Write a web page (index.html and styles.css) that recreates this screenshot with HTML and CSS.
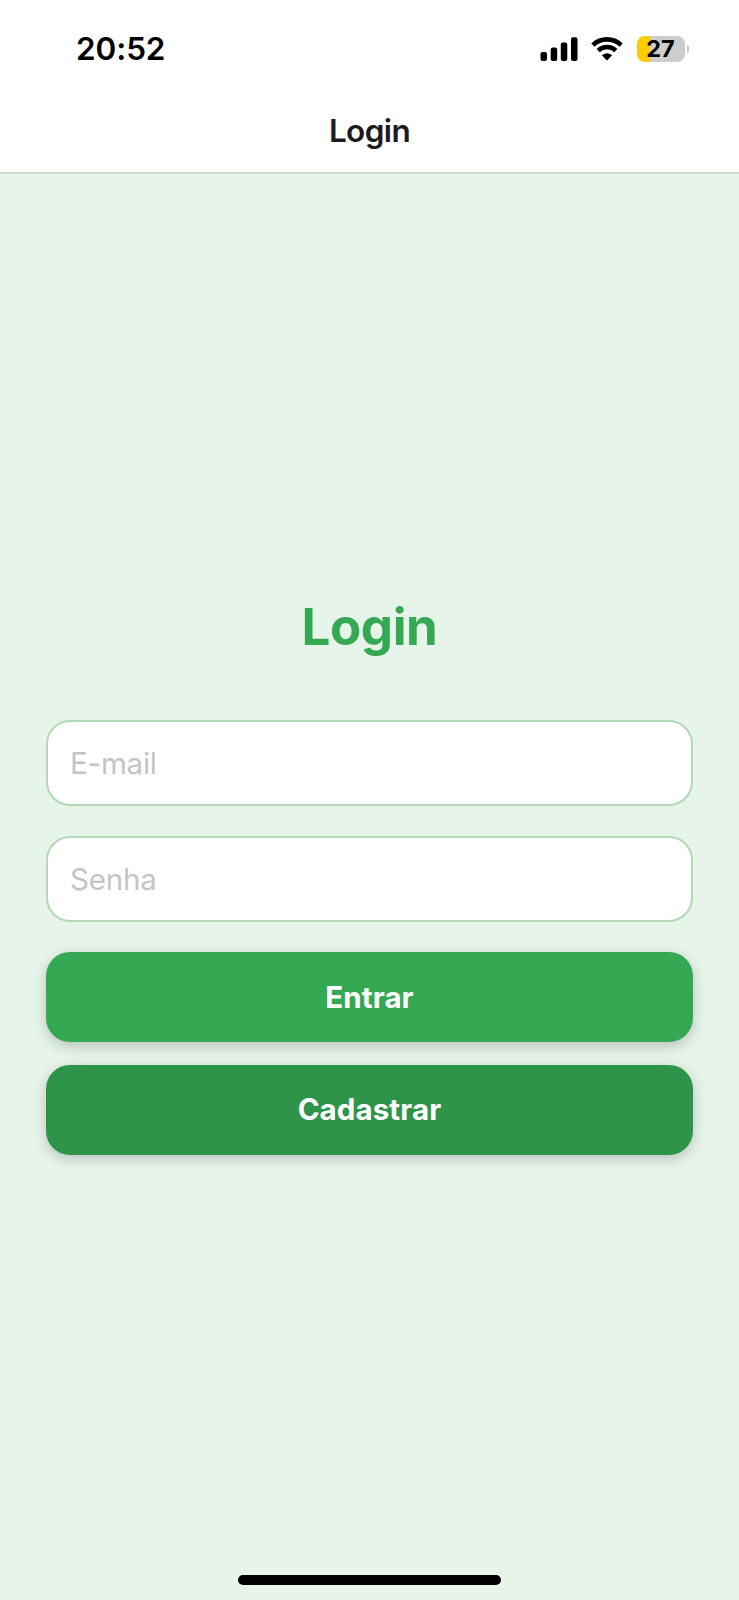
FILE: index.html
```html
<!DOCTYPE html>
<html lang="pt-BR">
<head>
<meta charset="utf-8">
<title>Login</title>
<link rel="stylesheet" href="styles.css">
</head>
<body>
<div class="screen">
  <header class="header">
    <div class="status">
      <span class="time">20:52</span>
      <div class="indicators">
        <svg class="signal" width="38" height="24" viewBox="0 0 38 24">
          <rect x="0.5" y="15" width="6.5" height="9" rx="2"/>
          <rect x="10.7" y="10.5" width="6.5" height="13.5" rx="2"/>
          <rect x="20.8" y="5.5" width="6.5" height="18.5" rx="2"/>
          <rect x="31" y="0.3" width="6.5" height="23.7" rx="2"/>
        </svg>
        <svg class="wifi" width="32" height="24" viewBox="0 0 32 24">
          <path d="M1.9 8.1A20.2 20.2 0 0 1 30.1 8.1" fill="none" stroke="#000" stroke-width="4.6"/>
          <path d="M7.2 13.6A12.6 12.6 0 0 1 24.8 13.6" fill="none" stroke="#000" stroke-width="4.4"/>
          <path d="M11.1 18.6Q10.8 18.2 11.3 17.9Q16 14.7 20.7 17.9Q21.2 18.2 20.9 18.6L16.6 23.1Q16 23.7 15.4 23.1Z"/>
        </svg>
        <div class="battery">
          <span class="battery-body">27</span>
          <span class="battery-tip"></span>
        </div>
      </div>
    </div>
    <div class="nav-title">Login</div>
  </header>
  <main class="content">
    <h1 class="title">Login</h1>
    <input class="field" type="text" placeholder="E-mail">
    <input class="field" type="password" placeholder="Senha">
    <button class="button" type="button">Entrar</button>
    <button class="button button-dark" type="button">Cadastrar</button>
  </main>
  <footer class="home"><div class="home-bar"></div></footer>
</div>
</body>
</html>
```
FILE: styles.css
```css
* { box-sizing: border-box; }
body {
  margin: 0;
  font-family: Inter, "Liberation Sans", sans-serif;
}
.screen {
  height: 1600px;
  display: flex;
  flex-direction: column;
  background: #e6f4ea;
  overflow: hidden;
}
.header {
  height: 174px;
  background: #fff;
  border-bottom: 2px solid #cddcd1;
}
.status {
  height: 98px;
  padding: 0 50px 0 76px;
  display: flex;
  align-items: center;
  justify-content: space-between;
}
.time {
  font-size: 31.5px;
  font-weight: 600;
  line-height: 40px;
  letter-spacing: -0.1px;
}
.indicators {
  display: flex;
  align-items: center;
}
.signal { display: block; margin-right: 13px; }
.wifi { display: block; margin-right: 14px; }
.battery {
  display: flex;
  align-items: center;
  gap: 2px;
}
.battery-body {
  width: 48px;
  height: 26px;
  border-radius: 7.5px;
  background: linear-gradient(to right, #fc0 13px, #cdcdcd 13px);
  font-size: 23.5px;
  font-weight: 700;
  line-height: 26px;
  text-align: center;
}
.battery-tip {
  width: 2.5px;
  height: 8px;
  border-radius: 0 3px 3px 0;
  background: #cdcdcd;
}
.nav-title {
  height: 66px;
  font-size: 31.5px;
  font-weight: 600;
  line-height: 66px;
  letter-spacing: -0.6px;
  text-align: center;
  color: #1c1c1e;
}
.content {
  flex: 1;
  padding: 422px 46px 0;
  display: flex;
  flex-direction: column;
}
.title {
  margin: 0 0 62px;
  font-size: 51px;
  font-weight: 700;
  line-height: 62px;
  letter-spacing: -0.4px;
  text-align: center;
  color: #34a853;
}
.field {
  width: 100%;
  height: 86px;
  margin: 0 0 30px;
  padding: 0 22px 1px;
  border: 2px solid #b2d8b4;
  border-radius: 24px;
  background: #fff;
  font: 400 29.5px Inter, "Liberation Sans", sans-serif;
  letter-spacing: -0.2px;
  outline: none;
}
.field::placeholder { color: #c4c4c6; opacity: 1; }
.button {
  flex: none;
  height: 90px;
  margin: 0 0 22.5px;
  padding: 0 0 1px;
  border: 0;
  border-radius: 24px;
  background: #34a853;
  box-shadow: 0 4px 14px rgba(0, 0, 0, 0.2);
  font: 700 29.5px Inter, "Liberation Sans", sans-serif;
  letter-spacing: 0.1px;
  color: #fff;
}
.button-dark { background: #2e9449; }
.home {
  height: 25px;
  display: flex;
  justify-content: center;
}
.home-bar {
  width: 263px;
  height: 10px;
  border-radius: 5px;
  background: #000;
}
```
